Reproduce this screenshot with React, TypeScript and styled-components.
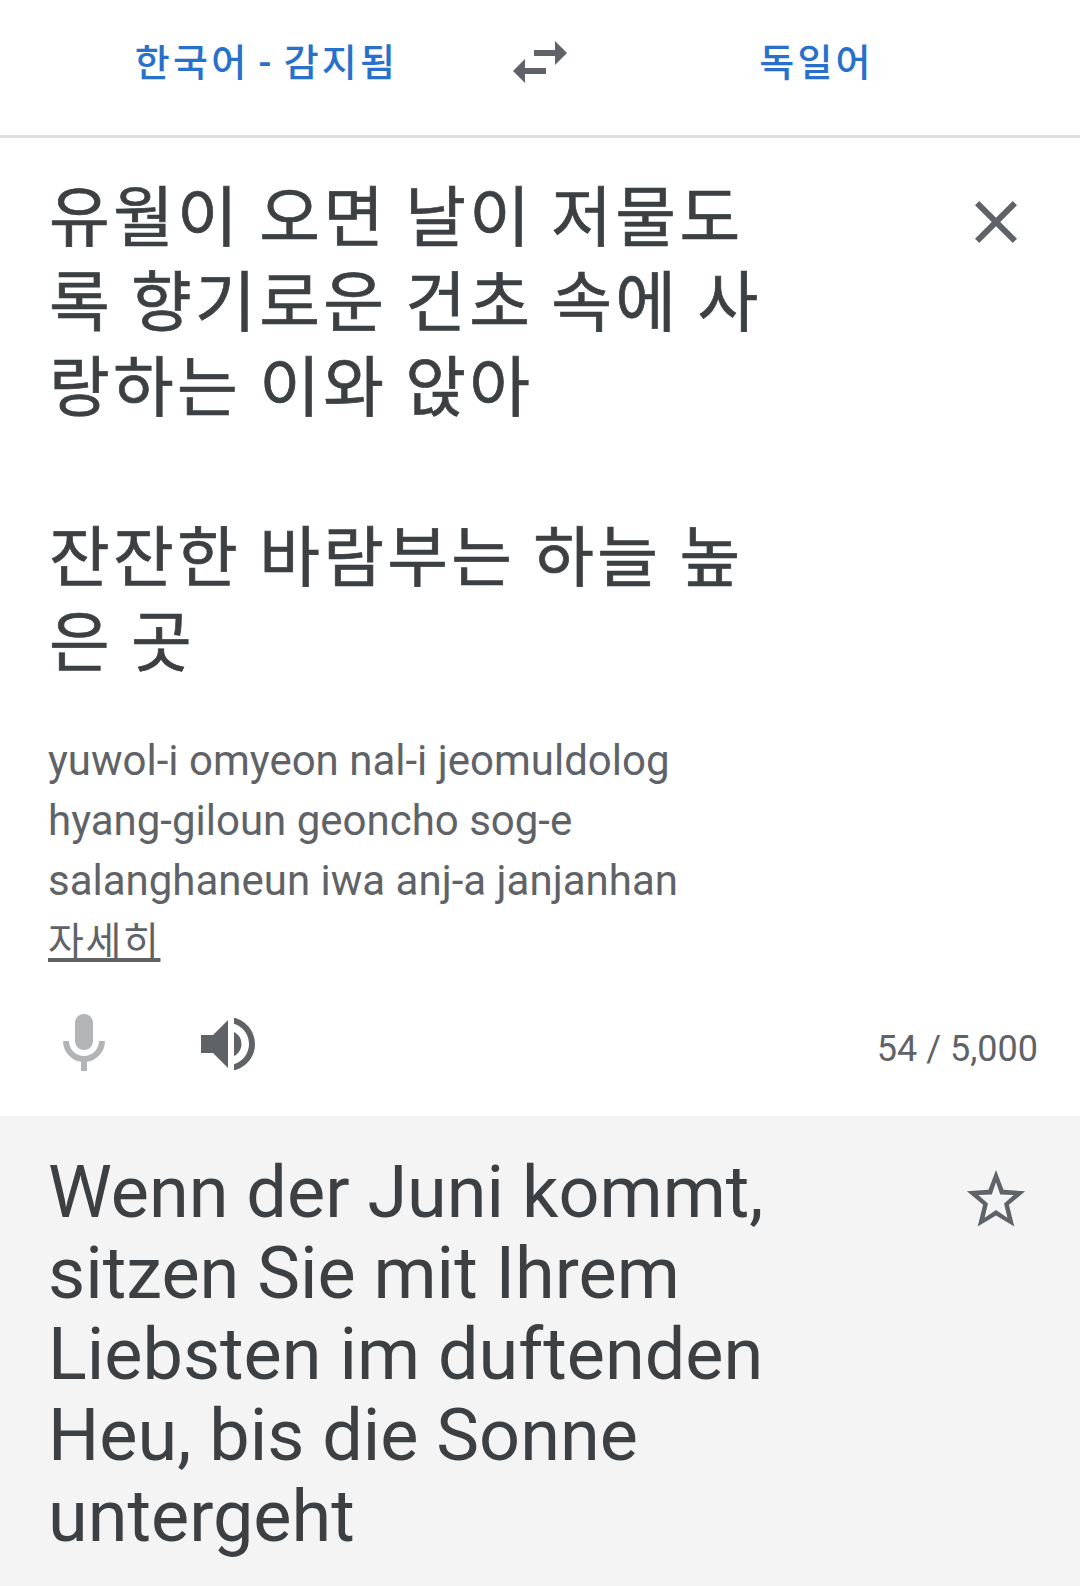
import React from "react";
import styled, { createGlobalStyle } from "styled-components";
import { MdSwapHoriz, MdClose, MdVolumeUp } from "react-icons/md";

const GlobalStyle = createGlobalStyle`
  body {
    margin: 0;
    background: #fff;
    font-family: Roboto, "Noto Sans CJK KR", sans-serif;
  }
`;

function App() {
  return (
    <>
      <GlobalStyle />
      <Wrap>
        <LangBar>
          <Lang>한국어 - 감지됨</Lang>
          <MdSwapHoriz size={72} color="#5f6368" />
          <Lang>독일어</Lang>
        </LangBar>
        <Source>
          <SourceTop>
            <SourceText>
              유월이 오면 날이 저물도
              <br />
              록 향기로운 건초 속에 사
              <br />
              랑하는 이와 앉아
              <br />
              <br />
              잔잔한 바람부는 하늘 높
              <br />은 곳
            </SourceText>
            <IconButton $top={10}>
              <MdClose size={72} />
            </IconButton>
          </SourceTop>
          <Roman>
            yuwol-i omyeon nal-i jeomuldolog
            <br />
            hyang-giloun geoncho sog-e
            <br />
            salanghaneun iwa anj-a janjanhan
            <br />
            <More>자세히</More>
          </Roman>
          <Tools>
            <svg width="72" height="72" viewBox="0 0 24 24" fill="#b2b4b5">
              <path d="M12 14c1.66 0 3-1.34 3-3V5c0-1.66-1.34-3-3-3S9 3.34 9 5v6c0 1.66 1.34 3 3 3z" />
              <path d="M17 11c0 2.76-2.24 5-5 5s-5-2.24-5-5H5c0 3.53 2.61 6.43 6 6.92V21h2v-3.08c3.39-.49 6-3.39 6-6.92h-2z" />
            </svg>
            <MdVolumeUp size={72} color="#5f6368" />
            <Count>54 / 5,000</Count>
          </Tools>
        </Source>
        <Result>
          <ResultText>
            Wenn der Juni kommt,
            <br />
            sitzen Sie mit Ihrem
            <br />
            Liebsten im duftenden
            <br />
            Heu, bis die Sonne
            <br />
            untergeht
          </ResultText>
          <IconButton $top={12}>
            <svg width="72" height="72" viewBox="0 0 24 24" fill="currentColor">
              <path
                fillRule="evenodd"
                d="M12 2l2.5 6.6 7.2.5-5.4 4.5L18.1 20.8 12 17.2 5.9 20.8l1.8-7.2L2.3 9.1l7.2-.5zM12 6.1l-1.4 4.1-4.5.1 3.2 2.9-1.1 4.7L12 15.3l3.8 2.6-1.1-4.7 3.2-2.9-4.5-.1z"
              />
            </svg>
          </IconButton>
        </Result>
      </Wrap>
    </>
  );
}

const Wrap = styled.div`
  display: flex;
  flex-direction: column;
  width: 1080px;
  height: 1586px;
  overflow: hidden;
`;

const LangBar = styled.div`
  display: grid;
  grid-template-columns: 1fr 72px 1fr;
  align-items: center;
  box-sizing: border-box;
  height: 138px;
  padding: 0 26px 11px;
  border-bottom: 3px solid #e0e0e0;
`;

const Lang = styled.span`
  padding: 0 0 5px 3px;
  color: #2970cb;
  font-size: 38px;
  font-weight: 500;
  letter-spacing: 3.2px;
  word-spacing: -3.5px;
  text-align: center;
`;

const Source = styled.div`
  box-sizing: border-box;
  height: 978px;
  padding: 38px 48px 0 48px;
`;

const SourceTop = styled.div`
  display: flex;
  justify-content: space-between;
  height: 555px;
`;

const SourceText = styled.div`
  padding-left: 1px;
  color: #3c4043;
  font-size: 66px;
  line-height: 85px;
  letter-spacing: 3.3px;
  word-spacing: -1.6px;
  white-space: nowrap;
  -webkit-text-stroke: 0.7px #3c4043;
`;

const IconButton = styled.div<{ $top: number }>`
  margin-top: ${(p) => p.$top}px;
  color: #5f6368;
`;

const Roman = styled.div`
  color: #5f6368;
  font-size: 42px;
  line-height: 60px;
`;

const More = styled.span`
  font-size: 39px;
  letter-spacing: 1.6px;
  text-decoration: underline;
  text-decoration-skip-ink: none;
  text-decoration-thickness: 4px;
  text-underline-offset: 3px;
`;

const Tools = styled.div`
  display: flex;
  align-items: center;
  gap: 72px;
  margin: 36px -6px 0 0;
`;

const Count = styled.span`
  margin-left: auto;
  padding-top: 10px;
  color: #5f6368;
  font-size: 36px;
`;

const Result = styled.div`
  display: flex;
  flex: 1;
  justify-content: space-between;
  padding: 36px 48px 0;
  background: #f4f4f4;
`;

const ResultText = styled.div`
  color: #3c4043;
  font-size: 72px;
  line-height: 81px;
  white-space: nowrap;
`;

export default App;
